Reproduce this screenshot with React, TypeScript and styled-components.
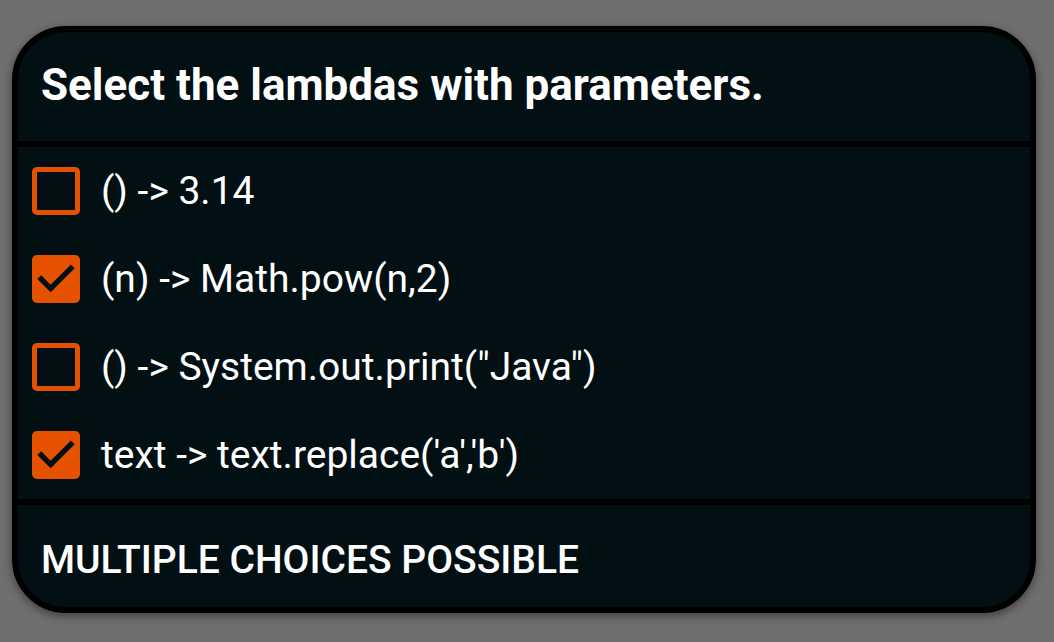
import React from "react";
import styled, { createGlobalStyle } from "styled-components";

const GlobalStyle = createGlobalStyle`
  html, body {
    margin: 0;
    padding: 0;
    background: #6f6f6f;
    font-family: Roboto, "Liberation Sans", sans-serif;
  }
`;

const Page = styled.div`
  width: 1054px;
  height: 642px;
  box-sizing: border-box;
  padding: 26px 18px 29px 12px;
  display: flex;
`;

const Card = styled.div`
  flex: 1;
  display: flex;
  flex-direction: column;
  background: #020f13;
  border: 6px solid #000;
  border-radius: 54px;
  overflow: hidden;
  box-shadow: 0 3px 10px rgba(0, 0, 0, 0.45);
`;

const Header = styled.div`
  height: 115px;
  box-sizing: border-box;
  display: flex;
  align-items: center;
  padding: 0 0 4px 23px;
  color: #fff;
  font-size: 44px;
  font-weight: 700;
  border-bottom: 6px solid #000;
`;

const Options = styled.div`
  display: flex;
  flex-direction: column;
  border-bottom: 6px solid #000;
`;

const Row = styled.label`
  height: 88px;
  display: flex;
  align-items: center;
  gap: 21px;
  padding-left: 14px;
  color: #fff;
  font-size: 39px;
`;

const Box = styled.span<{ $checked: boolean }>`
  width: 48px;
  height: 48px;
  box-sizing: border-box;
  border: ${(p) => (p.$checked ? "none" : "5px solid #e65100")};
  border-radius: 5px;
  background: ${(p) => (p.$checked ? "#e65100" : "transparent")};
  display: flex;
  flex-shrink: 0;
`;

const Footer = styled.div`
  flex: 1;
  display: flex;
  align-items: center;
  padding: 8px 0 0 23px;
  color: #fff;
  font-size: 39px;
  font-weight: 500;
`;

const Check = () => (
  <svg width="48" height="48" viewBox="3 3 18 18">
    <path d="M10 17l-5-5 1.41-1.41L10 14.17l7.59-7.59L19 8l-9 9z" fill="#020f13" />
  </svg>
);

const options = [
  { text: "() -> 3.14", checked: false },
  { text: "(n) -> Math.pow(n,2)", checked: true },
  { text: '() -> System.out.print("Java")', checked: false },
  { text: "text -> text.replace('a','b')", checked: true },
];

export default function App() {
  return (
    <>
      <GlobalStyle />
      <Page>
        <Card>
          <Header>Select the lambdas with parameters.</Header>
          <Options>
            {options.map((o) => (
              <Row key={o.text}>
                <Box $checked={o.checked}>{o.checked && <Check />}</Box>
                {o.text}
              </Row>
            ))}
          </Options>
          <Footer>MULTIPLE CHOICES POSSIBLE</Footer>
        </Card>
      </Page>
    </>
  );
}
